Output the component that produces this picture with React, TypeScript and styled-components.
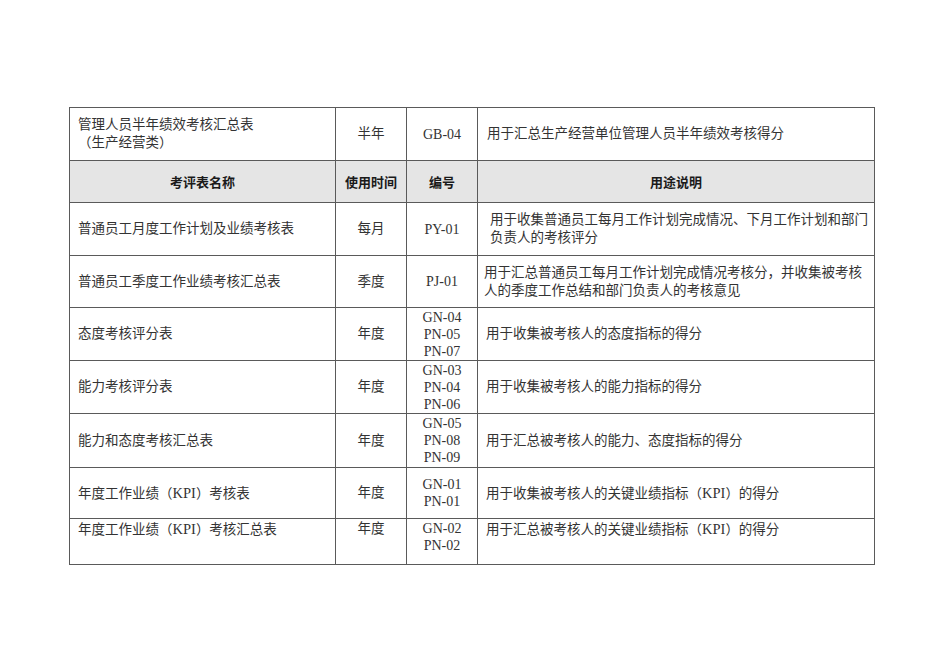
import React from 'react';
import styled, { createGlobalStyle } from 'styled-components';

const GlobalStyle = createGlobalStyle`
  html, body {
    margin: 0;
    padding: 0;
    background: #fff;
  }
  body {
    font-family: "Liberation Serif", "Noto Sans CJK SC", serif;
    color: #333;
  }
`;

const Page = styled.div`
  width: 950px;
  height: 672px;
  padding: 107px 0 0 69px;
  box-sizing: border-box;
`;

const Sheet = styled.table`
  border-collapse: collapse;
  table-layout: fixed;
  width: 805px;
  font-size: 13.5px;
  line-height: 18px;
`;

const Row = styled.tr<{ $h: number }>`
  height: ${(p) => p.$h}px;
`;

const Cell = styled.td<{ $align?: 'left' | 'center'; $top?: boolean; $pad?: number }>`
  border: 1px solid #5a5a5a;
  padding: ${(p) => (p.$top ? '1px' : '0')} ${(p) => p.$pad ?? 8}px 0;
  text-align: ${(p) => p.$align ?? 'left'};
  vertical-align: ${(p) => (p.$top ? 'top' : 'middle')};
  white-space: nowrap;
  overflow: hidden;
`;

const HeadRow = styled.tr`
  height: 42px;
  background: #e5e5e5;
`;

const HeadCell = styled.th`
  border: 1px solid #5a5a5a;
  padding: 0;
  font-family: "Noto Sans CJK SC", "Liberation Sans", sans-serif;
  font-weight: 700;
  font-size: 13px;
  color: #1a1a1a;
  text-align: center;
  vertical-align: middle;
`;

const Line = styled.span`
  display: block;
`;

const Latin = styled.span`
  font-size: 14.5px;
`;

const Codes = styled.div`
  line-height: 17px;
  font-size: 14px;
`;

type Entry = {
  name: string[];
  period: string;
  codes: string[];
  desc: string[];
  h: number;
  pad?: number;
  top?: boolean;
};

const entries: Entry[] = [
  {
    name: ['普通员工月度工作计划及业绩考核表'],
    period: '每月',
    codes: ['PY-01'],
    desc: ['用于收集普通员工每月工作计划完成情况、下月工作计划和部门', '负责人的考核评分'],
    h: 53,
    pad: 12,
  },
  {
    name: ['普通员工季度工作业绩考核汇总表'],
    period: '季度',
    codes: ['PJ-01'],
    desc: ['用于汇总普通员工每月工作计划完成情况考核分，并收集被考核', '人的季度工作总结和部门负责人的考核意见'],
    h: 52,
    pad: 6,
  },
  {
    name: ['态度考核评分表'],
    period: '年度',
    codes: ['GN-04', 'PN-05', 'PN-07'],
    desc: ['用于收集被考核人的态度指标的得分'],
    h: 53,
  },
  {
    name: ['能力考核评分表'],
    period: '年度',
    codes: ['GN-03', 'PN-04', 'PN-06'],
    desc: ['用于收集被考核人的能力指标的得分'],
    h: 53,
  },
  {
    name: ['能力和态度考核汇总表'],
    period: '年度',
    codes: ['GN-05', 'PN-08', 'PN-09'],
    desc: ['用于汇总被考核人的能力、态度指标的得分'],
    h: 54,
  },
  {
    name: ['年度工作业绩（KPI）考核表'],
    period: '年度',
    codes: ['GN-01', 'PN-01'],
    desc: ['用于收集被考核人的关键业绩指标（KPI）的得分'],
    h: 51,
  },
  {
    name: ['年度工作业绩（KPI）考核汇总表'],
    period: '年度',
    codes: ['GN-02', 'PN-02'],
    desc: ['用于汇总被考核人的关键业绩指标（KPI）的得分'],
    h: 46,
    top: true,
  },
];

// latin words inside chinese text are set a touch larger, like the source document
const withLatin = (text: string) =>
  text.split(/(KPI)/).map((part, i) => (part === 'KPI' ? <Latin key={i}>{part}</Latin> : part));

const lines = (items: string[]) => items.map((t) => <Line key={t}>{withLatin(t)}</Line>);

export default function App() {
  return (
    <Page>
      <GlobalStyle />
      <Sheet>
        <colgroup>
          <col style={{ width: 266 }} />
          <col style={{ width: 71 }} />
          <col style={{ width: 71 }} />
          <col style={{ width: 397 }} />
        </colgroup>
        <tbody>
          <Row $h={53}>
            <Cell>{lines(['管理人员半年绩效考核汇总表', '（生产经营类）'])}</Cell>
            <Cell $align="center">半年</Cell>
            <Cell $align="center"><Codes>GB-04</Codes></Cell>
            <Cell $pad={9}>用于汇总生产经营单位管理人员半年绩效考核得分</Cell>
          </Row>
          <HeadRow>
            <HeadCell>考评表名称</HeadCell>
            <HeadCell>使用时间</HeadCell>
            <HeadCell>编号</HeadCell>
            <HeadCell>用途说明</HeadCell>
          </HeadRow>
          {entries.map((e) => (
            <Row key={e.name[0]} $h={e.h}>
              <Cell $top={e.top}>{lines(e.name)}</Cell>
              <Cell $align="center" $top={e.top}>{e.period}</Cell>
              <Cell $align="center" $top={e.top}><Codes>{lines(e.codes)}</Codes></Cell>
              <Cell $top={e.top} $pad={e.pad}>{lines(e.desc)}</Cell>
            </Row>
          ))}
        </tbody>
      </Sheet>
    </Page>
  );
}
